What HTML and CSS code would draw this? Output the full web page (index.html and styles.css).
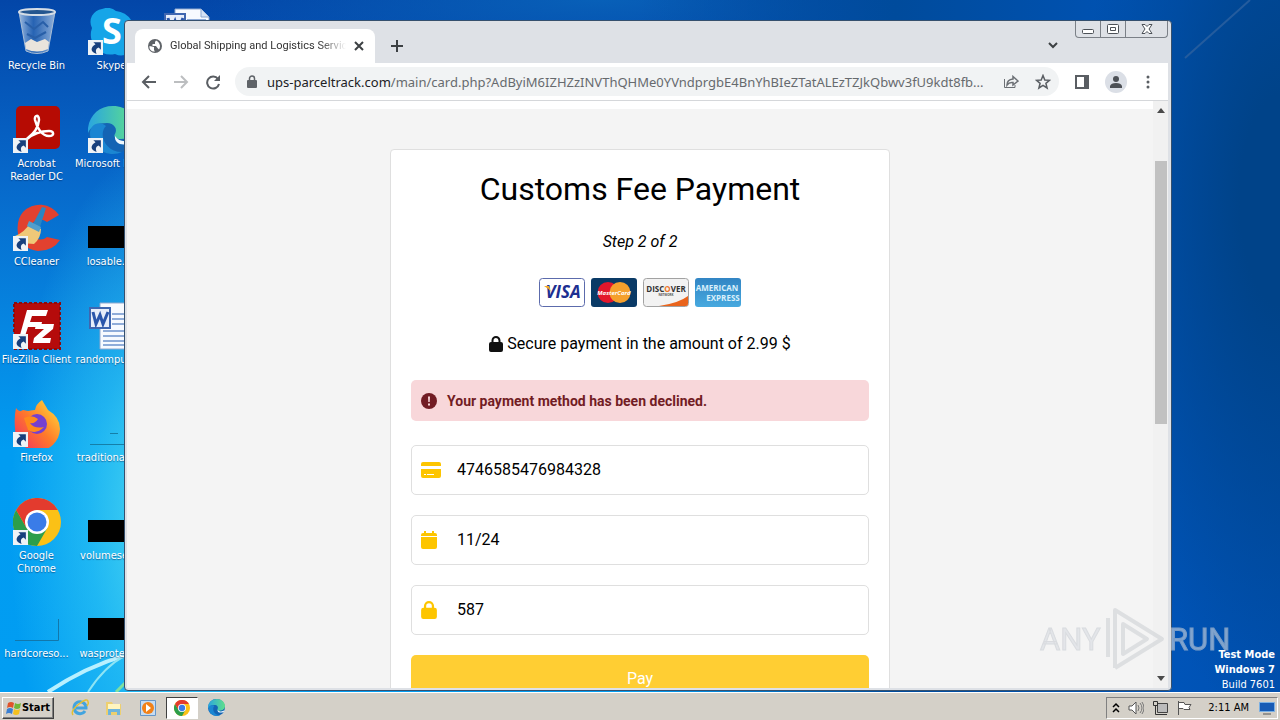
FILE: index.html
```
<!DOCTYPE html>
<html lang="en">

<head>
    <meta charset="UTF-8">
    <title>Desktop</title>
    <link rel="stylesheet" href="styles.css">
</head>

<body>
    <svg class="defs" width="0" height="0" aria-hidden="true">
        <defs>
            <linearGradient id="edgeTop" x1="0" y1="0" x2="1" y2="0">
                <stop offset="0" stop-color="#2aa5e0"/>
                <stop offset="1" stop-color="#5fe08a"/>
            </linearGradient>
            <linearGradient id="fire" x1="0" y1="1" x2="1" y2="0">
                <stop offset="0" stop-color="#f0256b"/>
                <stop offset="0.5" stop-color="#ff7a2a"/>
                <stop offset="1" stop-color="#ffe83c"/>
            </linearGradient>
            <linearGradient id="bin" x1="0" y1="0" x2="1" y2="0">
                <stop offset="0" stop-color="#c5d8ee" stop-opacity="0.8"/>
                <stop offset="0.4" stop-color="#3f74b8" stop-opacity="0.6"/>
                <stop offset="1" stop-color="#b5cbe6" stop-opacity="0.8"/>
            </linearGradient>
            <linearGradient id="amex" x1="0" y1="0" x2="0" y2="1">
                <stop offset="0" stop-color="#3285c4"/>
                <stop offset="1" stop-color="#47a9df"/>
            </linearGradient>
        </defs>
        <symbol id="arrow" viewBox="0 0 14 14">
            <path d="M0 0h14v14H0z" fill="#eef2f6"/>
            <path d="M5 2h7v7l-2-2c-3 1-3 3-2 6-6-2-6-6-1-9z" fill="#173f7c"/>
        </symbol>
        <symbol id="chrome" viewBox="0 0 48 48">
            <circle cx="24" cy="24" r="24" fill="#fbc116"/>
            <path d="M3.200 12A24 24 0 0 0 24 48l10.400-18L24 24 13.600 30z" fill="#2c9e4b"/>
            <path d="M24 12h20.800A24 24 0 0 0 3.200 12l10.400 18z" fill="#e33b2e"/>
            <circle cx="24" cy="24" r="12" fill="#fff"/>
            <circle cx="24" cy="24" r="9.500" fill="#3a7ce8"/>
        </symbol>
        <symbol id="edge" viewBox="0 0 48 48">
            <circle cx="24" cy="24" r="24" fill="#1464b4"/>
            <path d="M0 22C2 8 12 0 25 0c14 0 23 10 23 20 0 8-7 13-15 13-5 0-8-2-6-5 3-5-1-11-8-11C10 17 3 20 0 27z" fill="url(#edgeTop)"/>
            <path d="M18 20c-8 8-1 26 16 26-12 6-32-2-32-19 0-8 9-13 16-7z" fill="#1b86d2"/>
            <path d="M27 30c4 6 12 7 20 2l-1 3c-9 6-20 4-19-5z" fill="#eef8ff"/>
        </symbol>
        <symbol id="word" viewBox="0 0 48 48">
            <path d="M12 1h26l8 8v38H12z" fill="#f7faff" stroke="#8fa8cf"/>
            <path d="M38 1v8h8" fill="#d5e2f5" stroke="#8fa8cf"/>
            <path d="M24 12h19M24 17h19M24 22h19M15 29h28M15 34h28M15 39h28M15 43h28" stroke="#6d93cd" stroke-width="1.500"/>
            <path d="M2 6h20v20H2z" fill="#e6edfa" stroke="#3f66b0" stroke-width="2"/>
            <path d="m5 10 3 12 4-9 3 9 5-12" fill="none" stroke="#2a56ab" stroke-width="3"/>
        </symbol>
        <symbol id="lock" viewBox="0 0 448 512">
            <path d="M144 144v48h160v-48a80 80 0 0 0-160 0zm-64 48v-48a144 144 0 0 1 288 0v48h16a64 64 0 0 1 64 64v192a64 64 0 0 1-64 64H64a64 64 0 0 1-64-64V256a64 64 0 0 1 64-64z"/>
        </symbol>
    </svg>

    <main class="desktop">
        <svg class="rays" viewBox="0 0 1280 693" preserveAspectRatio="none" aria-hidden="true">
            <path d="M48 693Q85 668 126 656" stroke="#b8f0ff" stroke-width="4"/>
            <path d="M88 693Q104 668 124 657" stroke="#8de4f4" stroke-width="2"/>
            <path d="m116 693 10-10" stroke="#7fe0a0" stroke-width="3"/>
            <path d="M1185 58 1250 0" stroke="#245c9e" stroke-width="2"/>
        </svg>

        <ul class="icons">
            <li>
                <svg viewBox="0 0 48 48"><path d="M6 4h36l-7 39q-11 5-22 0z" fill="url(#bin)" stroke="#a9bed6"/><ellipse cx="24" cy="4" rx="18" ry="3" fill="#25568f" stroke="#d5dde6" stroke-width="2"/><path d="m12 35 6-4 6 3 8-3 4 3-1 7q-11 5-22 0z" fill="#e9e4dc"/><path d="m12 14 9 7 9-7 5 5M14 26l8 4 11-6" fill="none" stroke="#285fa8" stroke-width="2"/></svg>
                <span>Recycle Bin</span>
            </li>
            <li>
                <svg viewBox="0 0 48 48"><path d="M14 1a14 14 0 0 1 14 2 20 20 0 0 1 17 27 13 13 0 0 1-18 16A20 20 0 0 1 4 20 13 13 0 0 1 14 1z" fill="#16a5e8"/><text x="14" y="36" class="skype-s">S</text><use href="#arrow" x="0" y="32" width="15" height="15"/></svg>
                <span>Skype</span>
            </li>
            <li>
                <svg viewBox="0 0 48 48"><use href="#word"/></svg>
            </li>
            <li>
                <svg viewBox="0 0 48 48"><rect x="3" y="0" width="44" height="43" rx="5" fill="#b60b03"/><path d="M13 34c3-4 12-8 13-20 0-6-5-5-4 0 2 8 7 16 14 16 6 0 5-5 0-5-9 0-16 3-22 8" fill="none" stroke="#fff" stroke-width="2.500"/><use href="#arrow" x="0" y="32" width="15" height="15"/></svg>
                <span>Acrobat<br>Reader DC</span>
            </li>
            <li>
                <svg viewBox="0 0 48 48"><use href="#edge"/><use href="#arrow" x="0" y="32" width="15" height="15"/></svg>
                <span>Microsoft Edge</span>
            </li>
            <li></li>
            <li>
                <svg viewBox="0 0 48 48"><path d="M46 11A23 23 0 0 0 10 8Q3 16 5 30q4 15 20 17 15 0 22-11l-13-3a10 10 0 1 1 0-15z" fill="#e2412f"/><path d="m29 3 4 1-6 19-7-3z" fill="#2b86c2"/><path d="m17 19 11 6q0 9-7 15Q8 40 2 32q10-4 15-13z" fill="#efc878"/><path d="m16 17 12 6-2 5-12-6z" fill="#519fcd"/><use href="#arrow" x="0" y="32" width="15" height="15"/></svg>
                <span>CCleaner</span>
            </li>
            <li>
                <svg viewBox="0 0 48 48"><path d="M0 22h48v22H0z"/></svg>
                <span>losable.rtf</span>
            </li>
            <li></li>
            <li>
                <svg viewBox="0 0 48 48"><rect x="1" y="1" width="46" height="46" fill="#b50b0b" stroke="#8d0a0a" stroke-width="2" stroke-dasharray="3 2"/><path d="M14 8h21l-2 6H19l-2 6h12l-1 5H15l-5 15H5zM23 22h18l-1 5-11 9h9l-1 5H20l1-5 10-9h-9z" fill="#fff"/><use href="#arrow" x="0" y="32" width="15" height="15"/></svg>
                <span>FileZilla Client</span>
            </li>
            <li>
                <svg viewBox="0 0 48 48"><use href="#word"/></svg>
                <span>randompub.rtf</span>
            </li>
            <li></li>
            <li>
                <svg viewBox="0 0 48 48"><path d="M3 8q3 5 7 2l5 1q5-1 7-1 1-6 7-10l6 10q12 7 12 19a22 22 0 0 1-45-1Q1 17 3 8z" fill="url(#fire)"/><circle cx="24" cy="24" r="10" fill="#7540cf"/><path d="M11 18q8-4 14 1-3 5-8 4 4 6 14 4-8 8-16 3z" fill="#ff8a1c"/><use href="#arrow" x="0" y="32" width="15" height="15"/></svg>
                <span>Firefox</span>
            </li>
            <li>
                <svg viewBox="0 0 48 48"><path d="M2 44.500h46M22 33.500h8" stroke="#157fa8"/></svg>
                <span>traditional.jpg</span>
            </li>
            <li></li>
            <li>
                <svg viewBox="0 0 48 48"><use href="#chrome"/><use href="#arrow" x="0" y="32" width="15" height="15"/></svg>
                <span>Google<br>Chrome</span>
            </li>
            <li>
                <svg viewBox="0 0 48 48"><path d="M0 22h48v22H0z"/></svg>
                <span>volumesell...</span>
            </li>
            <li></li>
            <li>
                <svg viewBox="0 0 48 48"><path d="M2 44.500h43.500V23" fill="none" stroke="#1277ab"/></svg>
                <span>hardcoreso...</span>
            </li>
            <li>
                <svg viewBox="0 0 48 48"><path d="M0 22h48v22H0z"/></svg>
                <span>wasprotect...</span>
            </li>
        </ul>

        <p class="build"><b>Test Mode</b><b>Windows 7</b>Build 7601</p>

        <section class="window">
            <div class="controls">
                <button aria-label="Minimize"><svg width="14" height="12"><rect x="1.500" y="6.500" width="11" height="4" rx="1"/></svg></button>
                <button aria-label="Restore"><svg width="14" height="12"><rect x="1.500" y="1.500" width="11" height="9" rx="1"/><path d="M4.500 4.500h5v3h-5z"/></svg></button>
                <button class="close" aria-label="Close"><svg width="14" height="12"><path d="M2 1.500h3l2 2 2-2h3L9 6l3 4.500H9l-2-2-2 2H2L5 6z"/></svg></button>
            </div>
            <header class="tabs">
                <div class="tab">
                    <svg width="14" height="14" viewBox="0 0 14 14"><circle cx="7" cy="7" r="7" fill="#5f6368"/><path d="M1.500 7 6 8v3l1 1.500C3 13 1 10 1.500 7zM8 1.500 7 3v2H4.500v2H8l1.500 2L11 10.500c2-3 1-7-3-9z" fill="#fff"/></svg>
                    <span class="name">Global Shipping and Logistics Service</span>
                    <button aria-label="Close tab"><svg width="10" height="10" viewBox="0 0 10 10"><path d="m1 1 8 8M9 1 1 9" stroke="#3c4043" stroke-width="2"/></svg></button>
                </div>
                <button class="plus" aria-label="New tab"><svg width="12" height="12"><path d="M6 0v12M0 6h12" stroke="#3c4043" stroke-width="2"/></svg></button>
                <button class="down" aria-label="Search tabs"><svg width="10" height="8"><path d="m1 1 4 4 4-4" fill="none" stroke="#3c4043" stroke-width="2"/></svg></button>
            </header>
            <nav class="toolbar">
                <button aria-label="Back"><svg width="16" height="16"><path d="M15 8H2M8 2 2 8l6 6" fill="none" stroke="#5a5e63" stroke-width="2"/></svg></button>
                <button aria-label="Forward"><svg width="16" height="16"><path d="M1 8h13M8 2l6 6-6 6" fill="none" stroke="#bcbec0" stroke-width="2"/></svg></button>
                <button aria-label="Reload"><svg width="16" height="16"><path d="M13 5A6 6 0 1 0 14 10" fill="none" stroke="#5a5e63" stroke-width="2"/><path d="M15 1v6H9z" fill="#5a5e63"/></svg></button>
                <div class="address">
                    <svg width="10" height="14" viewBox="0 0 10 14"><path d="M1 5h8q1 0 1 1v6q0 1-1 1H1q-1 0-1-1V6q0-1 1-1z" fill="#5f6368"/><path d="M2.500 6V3.500a2.500 2.500 0 0 1 5 0V6" fill="none" stroke="#5f6368" stroke-width="1.500"/></svg>
                    <span class="url"><b>ups-parceltrack.com</b>/main/card.php?AdByiM6IZHZzINVThQHMe0YVndprgbE4BnYhBIeZTatALEzTZJkQbwv3fU9kdt8fb...</span>
                    <button aria-label="Share"><svg width="16" height="14"><path d="M1.500 4v8.500H12V10" fill="none" stroke="#6b6f74"/><path d="M10 1.500 15 6l-5 4V7.500Q6 7 4 10q0-5.500 6-6z" fill="none" stroke="#6b6f74" stroke-width="1.500"/></svg></button>
                    <button aria-label="Bookmark"><svg width="16" height="16"><path d="m8 1.500 1.800 4.500 4.700.3-3.600 3 1.200 4.700L8 11.400 3.900 14l1.200-4.700-3.600-3 4.700-.3z" fill="none" stroke="#5a5e63" stroke-width="1.500"/></svg></button>
                </div>
                <button aria-label="Side panel"><svg width="14" height="14"><path d="M1 1h12v12H1z" fill="#fff" stroke="#5a5e63" stroke-width="2"/><path d="M9 1h5v12H9z" fill="#5a5e63"/></svg></button>
                <button class="avatar" aria-label="Profile"><svg width="12" height="12"><circle cx="6" cy="3" r="3"/><path d="M0 12v-2q1-3 6-3t6 3v2z"/></svg></button>
                <button class="menu" aria-label="Menu"><svg width="4" height="14" fill="#5a5e63"><circle cx="2" cy="2" r="1.500"/><circle cx="2" cy="7" r="1.500"/><circle cx="2" cy="12" r="1.500"/></svg></button>
            </nav>
            <div class="view">
                <div class="page">
                    <form class="card" onsubmit="return false">
                        <h1>Customs Fee Payment</h1>
                        <p class="step">Step 2 of 2</p>
                        <div class="brands">
                            <svg viewBox="0 0 46 29"><rect x="0.500" y="0.500" width="45" height="28" rx="3" fill="#fff" stroke="#5c6bac"/><text x="24" y="20" class="visa">VISA</text><path d="M5 8h5l2 6q-3-4-7-6z" fill="#f2a922"/></svg>
                            <svg viewBox="0 0 46 29"><rect width="46" height="29" rx="3" fill="#0a3a66"/><circle cx="17" cy="14.500" r="10.500" fill="#e3172c"/><circle cx="29" cy="14.500" r="10.500" fill="#f5a02c"/><text x="23" y="17" class="master">MasterCard</text></svg>
                            <svg viewBox="0 0 46 29"><rect x="0.500" y="0.500" width="45" height="28" rx="3" fill="#f2f2f2" stroke="#a2a2a2"/><path d="M45 18v8q0 2-2 2H16q20-3 29-10z" fill="#e9641c"/><text x="23" y="14" class="disc">DISC<tspan fill="#ee7428">O</tspan>VER</text><text x="23" y="18" class="net">NETWORK</text></svg>
                            <svg viewBox="0 0 46 29"><rect width="46" height="29" rx="3" fill="url(#amex)"/><text x="22" y="13" class="amex">AMERICAN</text><text x="28" y="23" class="amex">EXPRESS</text></svg>
                        </div>
                        <p class="secure"><svg width="14" height="16" fill="#111"><use href="#lock"/></svg>Secure payment in the amount of 2.99 $</p>
                        <div class="alert" role="alert">
                            <svg width="16" height="16"><circle cx="8" cy="8" r="8" fill="#721c24"/><path d="M7 3.500h2L8.700 9H7.300zM7 10.500h2v2H7z" fill="#f8d7da"/></svg>
                            Your payment method has been declined.
                        </div>
                        <div class="field">
                            <svg width="20" height="16"><path d="M2 0h16q2 0 2 2v2H0V2q0-2 2-2zM0 7h20v7q0 2-2 2H2q-2 0-2-2z"/><path d="M3 12.500h2M6 12.500h7" stroke="#fff"/></svg>
                            <input type="text" aria-label="Card number" value="4746585476984328">
                        </div>
                        <div class="field">
                            <svg width="16" height="18"><path d="M3 0h2v2h6V0h2v2h1q2 0 2 2v1H0V4q0-2 2-2h1zM0 6h16v10q0 2-2 2H2q-2 0-2-2z"/></svg>
                            <input type="text" aria-label="Expiry date" value="11/24">
                        </div>
                        <div class="field">
                            <svg width="16" height="18"><use href="#lock"/></svg>
                            <input type="text" aria-label="Security code" value="587">
                        </div>
                        <button class="pay" type="button">Pay</button>
                    </form>
                </div>
                <div class="scroll">
                    <svg width="8" height="5"><path d="M4 0l4 5H0z"/></svg>
                    <div class="track"><div class="thumb"></div></div>
                    <svg width="8" height="5"><path d="M0 0h8L4 5z"/></svg>
                </div>
            </div>
        </section>

        <svg class="watermark" width="200" height="72" aria-label="ANY RUN">
            <text x="4" y="46">ANY</text>
            <path d="M72 53V14M79 64V6l47 29-47 29M87 50V20l24 15-24 15z"/>
            <text x="133" y="46">RUN</text>
        </svg>
    </main>

    <footer class="taskbar">
        <button class="start">
            <svg width="16" height="16"><path d="M2 3q3-2 6 0L7 8Q4 6 1 8z" fill="#e0532a"/><path d="M9 3q3 2 6 0l-1 5q-3 2-6 0z" fill="#72b636"/><path d="M1 9q3-2 6 0l-1 5q-3-2-6 0z" fill="#3a7fd2"/><path d="M8 9q3 2 6 0l-1 5q-3 2-6 0z" fill="#f4c01e"/></svg>
            Start
        </button>
        <button class="task" aria-label="Internet Explorer"><svg width="18" height="18"><path d="M14 12a6 6 0 1 1 1-3H5" fill="none" stroke="#42a4df" stroke-width="3"/><path d="M2 16Q-1 12 8 5t9-2q1 1-1 4" fill="none" stroke="#e4bf31" stroke-width="1.500"/></svg></button>
        <button class="task" aria-label="Explorer"><svg width="18" height="18"><path d="M1 3h6l1 2h8v11H1z" fill="#edcf70"/><path d="M3 5h12v5H3z" fill="#fff5bf"/><path d="M3 16v-6h12v6h-3v-3H6v3z" fill="#6fb5dc"/></svg></button>
        <button class="task" aria-label="Media Player"><svg width="18" height="18"><path d="M1.500 1.500h15v15h-15z" fill="#c6dcf2" stroke="#6596c9"/><circle cx="9" cy="9" r="6" fill="#f28118"/><path d="m7 5 5 4-5 4z" fill="#fff"/></svg></button>
        <button class="task active" aria-label="Chrome"><svg width="16" height="16"><use href="#chrome"/></svg></button>
        <button class="task" aria-label="Edge"><svg width="17" height="17"><use href="#edge"/></svg></button>
        <div class="tray">
            <svg width="8" height="12"><path d="m1 5 3-3 3 3M1 10l3-3 3 3" fill="none" stroke="#000" stroke-width="1.500"/></svg>
            <svg width="16" height="16"><path d="M1 6h3l4-4v12l-4-4H1z" fill="#fff" stroke="#555"/><path d="M10 5q2 3 0 6M12 3q4 5 0 10M14 2q4 6 0 12" fill="none" stroke="#777"/></svg>
            <svg width="16" height="16"><path d="M5.500 3.500h10v9h-10z" fill="#bbb" stroke="#444"/><path d="M7 14.500h8M1.500 1.500h4v4h-4zM3.500 5.500v9H7" fill="none" stroke="#333"/></svg>
            <svg width="16" height="16"><path d="M2.500 1v14M3 2.500h5l1 2h6l-2 3 1 2H8l-1-1H3" fill="#fff" stroke="#555"/></svg>
            <time>2:11 AM</time>
            <svg width="16" height="14"><path d="M.5 1.500h15v9H.5z" fill="#175bb5" stroke="#7ab0e4"/><path d="M4 13h8" stroke="#555"/></svg>
        </div>
    </footer>
</body>

</html>
```
FILE: styles.css
```
* {
    margin: 0;
    padding: 0;
    box-sizing: border-box;
    list-style: none;
}

body {
    height: 100vh;
    display: flex;
    flex-direction: column;
    overflow: hidden;
    font: 11px/13px "DejaVu Sans Condensed", "DejaVu Sans", sans-serif;
}

button {
    border: 0;
    background: none;
    font: inherit;
    display: flex;
    align-items: center;
    justify-content: center;
}

svg {
    flex: none;
}

.defs {
    position: absolute;
}

/* desktop */
.desktop {
    flex: 1;
    min-height: 0;
    position: relative;
    overflow: hidden;
    background:
        radial-gradient(ellipse 160px 380px at 170px 520px, rgba(90, 225, 240, 0.9), rgba(60, 210, 245, 0.5) 50%, transparent),
        radial-gradient(ellipse 200px 520px at 100% 200px, #004389 20%, transparent),
        linear-gradient(to right, transparent 50%, #004b9c 70%, #0054b8 92%, #0050b0),
        radial-gradient(ellipse 400px 60px at 600px 0, #0860b8, transparent),
        linear-gradient(#0346a8, #0767c9 25%, #0687e2 48%, #019cf1 65%, #019df2);
}

.rays {
    position: absolute;
    width: 100%;
    height: 100%;
    fill: none;
}

.icons {
    position: relative;
    display: grid;
    grid-template-columns: repeat(3, 75px);
    grid-auto-rows: 98px;
    padding-top: 8px;
    color: #fff;
    text-align: center;
    text-shadow: 0 1px 1px rgba(0, 30, 80, 0.5);
    margin-left: -1px;
}

.icons li {
    display: flex;
    flex-direction: column;
    align-items: center;
    gap: 3px;
    white-space: nowrap;
}

.icons svg {
    width: 48px;
    height: 48px;
}

.skype-s {
    font: bold 36px "Open Sans", sans-serif;
    fill: #fff;
    text-shadow: none;
}

.build {
    position: absolute;
    right: 5px;
    bottom: 0;
    color: #fff;
    text-align: right;
    line-height: 15px;
}

.build b {
    display: block;
}

/* browser window */
.window {
    position: absolute;
    top: 20px;
    left: 124px;
    right: 108px;
    bottom: 1px;
    display: flex;
    flex-direction: column;
    border: 1px solid #35506e;
    border-radius: 4px;
    background: #dee1e6;
    padding: 0 3px 2px 2px;
}

.controls {
    position: absolute;
    top: 0;
    right: 3px;
    display: flex;
    border: 1px solid #7b8087;
    border-top: 0;
    border-radius: 0 0 4px 4px;
}

.controls button {
    width: 25px;
    height: 16px;
    border-right: 1px solid #7b8087;
}

.controls .close {
    width: 41px;
    border: 0;
}

.controls svg {
    fill: #fff;
    stroke: #4c5157;
}

.tabs {
    display: flex;
    align-items: center;
    height: 42px;
    padding: 8px 110px 0 8px;
}

.tab {
    width: 240px;
    height: 34px;
    display: flex;
    align-items: center;
    gap: 8px;
    padding: 0 11px 0 13px;
    border-radius: 8px 8px 0 0;
    background: #fff;
    color: #333;
    font-family: Roboto, sans-serif;
}

.name {
    flex: 1;
    overflow: hidden;
    white-space: nowrap;
    line-height: 16px;
    -webkit-mask-image: linear-gradient(to right, #000 85%, transparent);
    mask-image: linear-gradient(to right, #000 85%, transparent);
}

.plus {
    margin-left: 16px;
}

.down {
    margin-left: auto;
}

.toolbar {
    display: flex;
    align-items: center;
    gap: 16px;
    height: 38px;
    padding: 0 18px 0 14px;
    background: #fff;
    border-bottom: 1px solid #d5d7da;
}

.address {
    flex: 1;
    min-width: 0;
    height: 29px;
    display: flex;
    align-items: center;
    gap: 16px;
    padding: 0 8px 0 12px;
    border-radius: 15px;
    background: #f1f3f4;
    margin-left: -2px;
}

.url {
    flex: 1;
    overflow: hidden;
    white-space: nowrap;
    color: #666a6e;
    font: 13px/20px "Noto Sans", sans-serif;
    margin: 0 -6px;
}

.url b {
    font-weight: normal;
    color: #202124;
}

.avatar {
    width: 22px;
    height: 22px;
    border-radius: 50%;
    background: #dbdfe6;
    fill: #4d5156;
}

.menu {
    margin-left: 3px;
}

.view {
    flex: 1;
    min-height: 0;
    display: flex;
    overflow: hidden;
    background: #f4f4f4;
}

.page {
    flex: 1;
    border-top: 8px solid #fff;
    padding: 40px 20px;
    font: 16px/24px Roboto, sans-serif;
    color: #000;
}

.scroll {
    width: 15px;
    display: flex;
    flex-direction: column;
    align-items: center;
    padding: 7px 0;
    background: #f1f1f1;
    fill: #4a4a4a;
}

.track {
    flex: 1;
    width: 12px;
    padding-top: 48px;
}

.thumb {
    height: 51%;
    background: #c1c1c1;
}

/* payment form */
.card {
    max-width: 500px;
    margin: 0 auto;
    padding: 20px;
    border: 1px solid #dfdfdf;
    border-radius: 4px;
    background: #fff;
}

.card h1 {
    font-size: 32px;
    line-height: 38px;
    font-weight: normal;
    text-align: center;
}

.step {
    margin-top: 22px;
    font-style: italic;
    text-align: center;
}

.brands {
    display: flex;
    justify-content: center;
    gap: 6px;
    margin: 24px 0 25px;
}

.brands svg {
    width: 46px;
    height: 29px;
}

.brands text {
    text-anchor: middle;
    font-family: "Open Sans", sans-serif;
    font-weight: bold;
}

.visa {
    font-size: 17px;
    font-style: italic;
    fill: #1d2f91;
}

.master {
    font-size: 6px;
    font-style: italic;
    fill: #fff;
}

.disc {
    font-size: 8px;
    fill: #333;
}

.net {
    font-size: 3px;
    fill: #555;
}

.amex {
    font-size: 8px;
    fill: #d9effb;
}

.secure {
    display: flex;
    align-items: center;
    justify-content: center;
    gap: 4px;
}

.alert {
    display: flex;
    align-items: center;
    gap: 10px;
    height: 41px;
    margin: 24px 0;
    padding: 0 10px;
    border-radius: 5px;
    background: #f8d7da;
    color: #721c24;
    font-size: 14px;
    font-weight: bold;
}

.field {
    display: flex;
    align-items: center;
    height: 50px;
    margin-bottom: 20px;
    padding: 0 9px;
    border: 1px solid #dfdfdf;
    border-radius: 5px;
    fill: #fdc500;
}

.field svg {
    margin-right: auto;
}

.field input {
    width: calc(100% - 36px);
    border: 0;
    outline: 0;
    background: none;
    font: inherit;
    color: #000;
}

.pay {
    width: 100%;
    height: 48px;
    border-radius: 5px;
    background: #ffce33;
    color: #fff;
}

.watermark {
    position: absolute;
    right: 44px;
    bottom: 16px;
    opacity: 0.6;
}

.watermark text {
    font: 31px Roboto, sans-serif;
    fill: #d8dce2;
    stroke: #c8ccd2;
}

.watermark path {
    fill: none;
    stroke: #cfd2d6;
    stroke-width: 4;
    stroke-linejoin: round;
}

/* taskbar */
.taskbar {
    display: flex;
    align-items: center;
    gap: 2px;
    height: 28px;
    padding: 2px 2px 0;
    border-top: 1px solid #fff;
    background: #d4d0c8;
}

.start {
    width: 52px;
    height: 22px;
    border: 1px solid;
    border-color: #fff #404040 #404040 #fff;
    box-shadow: inset -1px -1px #808080;
    font-weight: bold;
    margin-right: 8px;
}

.task {
    width: 32px;
    height: 22px;
}

.active {
    background: #fff;
    border: 1px solid;
    border-color: #404040 #fff #fff #404040;
}

.tray {
    display: flex;
    align-items: center;
    gap: 8px;
    height: 22px;
    margin-left: auto;
    padding: 0 2px 0 5px;
    border: 1px solid;
    border-color: #808080 #fff #fff #808080;
}

.tray time {
    margin: 0 2px 0 8px;
}
```
